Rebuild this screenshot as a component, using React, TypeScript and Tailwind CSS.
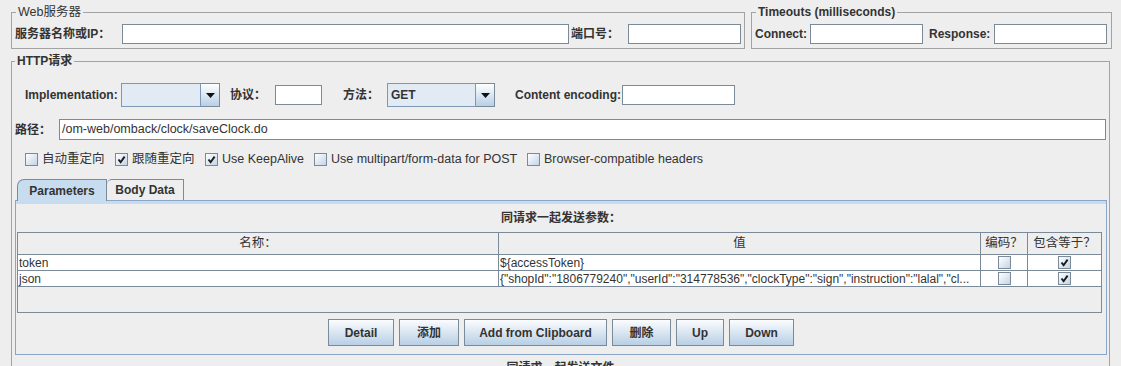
import React from 'react';

const FONT = "font-['Liberation_Sans','Noto_Sans_CJK_SC',sans-serif]";

const TextBox = ({ className = '', value = '' }: { className?: string; value?: string }) => (
  <div
    className={`h-[20px] shrink-0 bg-white border border-[#7a8a99] px-[2px] flex items-center text-[12.5px] text-[#333] whitespace-nowrap overflow-hidden ${className}`}
  >
    {value}
  </div>
);

const Combo = ({ className = '', value = '' }: { className?: string; value?: string }) => (
  <div className={`flex shrink-0 h-[24px] ${className}`}>
    <div className="flex-1 bg-[#e2eaf3] border border-[#7d97b5] flex items-center pl-[3px] font-bold text-[12px] text-[#333]">
      {value}
    </div>
    <div className="w-[19px] border border-l-0 border-[#7a8a99] bg-gradient-to-b from-white to-[#b8cfe5] flex items-center justify-center">
      <svg width="9" height="5" viewBox="0 0 9 5">
        <path d="M0 0H9L4.5 5Z" fill="#111" />
      </svg>
    </div>
  </div>
);

const CheckBox = ({ checked }: { checked?: boolean }) => (
  <span className="w-[13px] h-[13px] shrink-0 border border-[#7a8a99] bg-gradient-to-br from-white to-[#c3d4e6] flex items-center justify-center">
    {checked && (
      <svg width="9" height="9" viewBox="0 0 9 9">
        <path d="M1.5 4.5L3.6 7.2L7.6 1.6" stroke="#1a1a1a" strokeWidth="1.9" fill="none" />
      </svg>
    )}
  </span>
);

const Button = ({ label, className = '' }: { label: string; className?: string }) => (
  <div
    className={`h-[27px] border border-[#7a8a99] bg-gradient-to-b from-[#fbfcfe] to-[#b8cfe5] flex items-center justify-center font-bold text-[12px] text-[#333] ${className}`}
  >
    {label}
  </div>
);

const options = [
  { label: '自动重定向', checked: false, w: 'w-[90px]' },
  { label: '跟随重定向', checked: true, w: 'w-[90px]' },
  { label: 'Use KeepAlive', checked: true, w: 'w-[109px]' },
  { label: 'Use multipart/form-data for POST', checked: false, w: 'w-[213px]' },
  { label: 'Browser-compatible headers', checked: false, w: 'w-[200px]' },
];

const params = [
  { name: 'token', value: '${accessToken}' },
  {
    name: 'json',
    value: '{"shopId":"1806779240","userId":"314778536","clockType":"sign","instruction":"lalal","cl...',
  },
];

export default function App() {
  return (
    <div className={`w-[1121px] h-[366px] overflow-hidden bg-[#eeeeee] pl-[11px] pt-[5px] text-[#333] ${FONT}`}>
      {/* server + timeouts */}
      <div className="flex gap-[6px]">
        <fieldset className="w-[734px] border border-[#a3a3a3] px-[3px] pb-[4px]">
          <legend className="ml-[1px] px-[2px] leading-[14px] text-[12.5px]">Web服务器</legend>
          <div className="flex items-center h-[20px] mt-[5px]">
            <span className="w-[107px] shrink-0 font-bold text-[12px]">服务器名称或IP：</span>
            <TextBox className="w-[447px]" />
            <span className="w-[59px] shrink-0 pl-[2px] font-bold text-[12px]">端口号：</span>
            <TextBox className="w-[113px]" />
          </div>
        </fieldset>
        <fieldset className="w-[361px] border border-[#a3a3a3] px-[3px] pb-[4px]">
          <legend className="ml-[1px] px-[2px] leading-[14px] font-bold text-[12px]">Timeouts (milliseconds)</legend>
          <div className="flex items-center h-[20px] mt-[5px]">
            <span className="w-[55px] shrink-0 font-bold text-[12px]">Connect:</span>
            <TextBox className="w-[113px]" />
            <span className="w-[71px] shrink-0 pl-[6px] font-bold text-[12px]">Response:</span>
            <TextBox className="w-[113px]" />
          </div>
        </fieldset>
      </div>

      {/* HTTP request */}
      <fieldset className="mt-[5px] w-[1099px] h-[400px] border border-[#a3a3a3]">
        <legend className="ml-[3px] px-[2px] leading-[14px] font-bold text-[12px]">HTTP请求</legend>

        <div className="flex items-center h-[24px] mt-[15px] pl-[13px] font-bold text-[12px]">
          <span className="w-[96px] shrink-0">Implementation:</span>
          <Combo className="w-[99px]" />
          <span className="ml-[10px] w-[45px] shrink-0">协议：</span>
          <TextBox className="w-[47px]" />
          <span className="ml-[21px] w-[44px] shrink-0">方法：</span>
          <Combo className="w-[108px]" value="GET" />
          <span className="ml-[20px] w-[107px] shrink-0">Content encoding:</span>
          <TextBox className="w-[113px]" />
        </div>

        <div className="flex items-center h-[21px] mt-[12px] pl-[3px] pr-[3px]">
          <span className="w-[44px] shrink-0 font-bold text-[12px]">路径：</span>
          <TextBox className="flex-1 h-[21px]" value="/om-web/omback/clock/saveClock.do" />
        </div>

        <div className="flex items-center h-[16px] mt-[11px] pl-[13px] text-[12.5px]">
          {options.map((o) => (
            <div key={o.label} className={`flex items-center gap-[4px] shrink-0 ${o.w}`}>
              <CheckBox checked={o.checked} />
              <span className="whitespace-nowrap">{o.label}</span>
            </div>
          ))}
        </div>

        {/* tabs */}
        <div className="flex items-end mt-[12px] ml-[5px] relative z-10 -mb-[1px] font-bold text-[12px]">
          <div className="w-[90px] h-[22px] bg-[#c8dcf0] border border-b-0 border-[#7a8a99] rounded-tl-[7px] flex items-center justify-center">
            Parameters
          </div>
          <div className="w-[77px] h-[21px] mb-[1px] bg-[#eeeeee] border border-b-0 border-l-0 border-[#7a8a99] rounded-tl-[5px] flex items-center justify-center">
            Body Data
          </div>
        </div>

        <div className="ml-[3px] w-[1092px] border border-[#8ba5c9] pb-[8px]">
          <div className="h-[3px] bg-[#c8dcf0]" />
          <div className="mt-[6px] h-[16px] flex items-center justify-center font-bold text-[12px]">
            同请求一起发送参数：
          </div>
          <div className="mt-[6px] ml-[1px] w-[1085px] h-[81px] border border-[#7a8a99] text-[12px]">
            <div className="grid grid-cols-[481px_482px_47px_73px]">
              {['名称：', '值', '编码？', '包含等于？'].map((h, i) => (
                <div
                  key={h}
                  className={`h-[22px] flex items-center justify-center border-b border-[#7a8a99] bg-[#eeeeee] text-[12.5px] ${i < 3 ? 'border-r' : ''}`}
                >
                  {h}
                </div>
              ))}
              {params.map((p) => (
                <React.Fragment key={p.name}>
                  <div className="h-[16px] bg-white border-b border-r border-[#7a8a99] px-[1px] flex items-center whitespace-nowrap overflow-hidden">
                    {p.name}
                  </div>
                  <div className="h-[16px] bg-white border-b border-r border-[#7a8a99] px-[1px] flex items-center whitespace-nowrap overflow-hidden">
                    {p.value}
                  </div>
                  <div className="h-[16px] bg-white border-b border-r border-[#7a8a99] flex items-center justify-center">
                    <CheckBox />
                  </div>
                  <div className="h-[16px] bg-white border-b border-[#7a8a99] flex items-center justify-center">
                    <CheckBox checked />
                  </div>
                </React.Fragment>
              ))}
            </div>
          </div>
          <div className="mt-[6px] flex justify-center gap-[5px]">
            <Button label="Detail" className="w-[66px]" />
            <Button label="添加" className="w-[60px]" />
            <Button label="Add from Clipboard" className="w-[143px]" />
            <Button label="删除" className="w-[59px]" />
            <Button label="Up" className="w-[48px]" />
            <Button label="Down" className="w-[65px]" />
          </div>
        </div>

        <div className="mt-[5px] h-[16px] flex items-center justify-center font-bold text-[12px]">
          同请求一起发送文件
        </div>
      </fieldset>
    </div>
  );
}
